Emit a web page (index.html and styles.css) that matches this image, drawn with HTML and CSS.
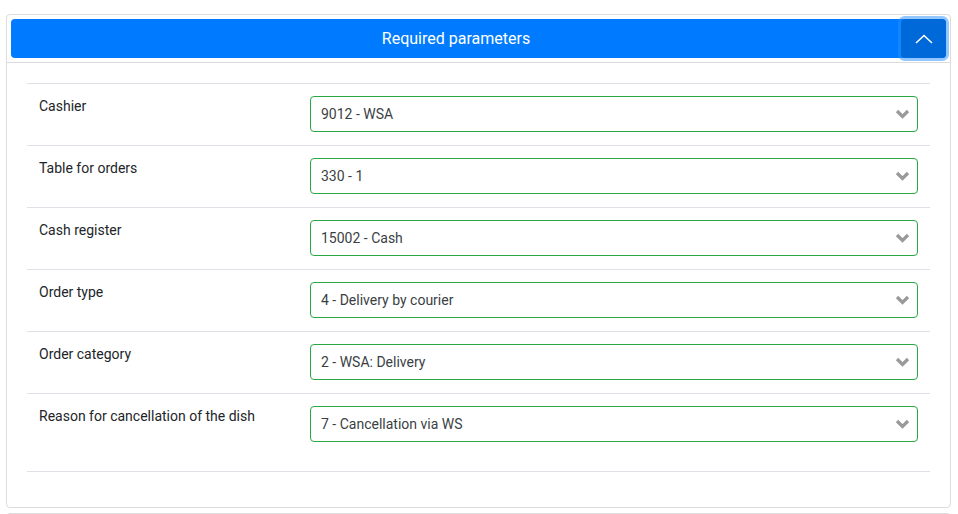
FILE: index.html
```html
<!DOCTYPE html>
<html>
<head>
    <title>Required parameters</title>
    <link rel="stylesheet" href="styles.css">
</head>
<body>
    <div class="page">
        <div class="card">
            <div class="card-header">
                <div class="header-bar">
                    <div class="header-title">Required parameters</div>
                    <button type="button" class="collapse-btn">
                        <svg width="18" height="10" viewBox="0 0 18 10"><polyline points="1,9 9,1.5 17,9" fill="none" stroke="#fff" stroke-width="1.6"/></svg>
                    </button>
                </div>
            </div>
            <div class="card-body">
                <div class="params">
                    <div class="param-row">
                        <div class="param-label">Cashier</div>
                        <div class="select-box"><span>9012 - WSA</span><svg class="caret" width="15" height="10" viewBox="0 0 15 10"><polyline points="2,2 7.5,7.5 13,2" fill="none" stroke="#999" stroke-width="3.2"/></svg></div>
                    </div>
                    <div class="param-row">
                        <div class="param-label">Table for orders</div>
                        <div class="select-box"><span>330 - 1</span><svg class="caret" width="15" height="10" viewBox="0 0 15 10"><polyline points="2,2 7.5,7.5 13,2" fill="none" stroke="#999" stroke-width="3.2"/></svg></div>
                    </div>
                    <div class="param-row">
                        <div class="param-label">Cash register</div>
                        <div class="select-box"><span>15002 - Cash</span><svg class="caret" width="15" height="10" viewBox="0 0 15 10"><polyline points="2,2 7.5,7.5 13,2" fill="none" stroke="#999" stroke-width="3.2"/></svg></div>
                    </div>
                    <div class="param-row">
                        <div class="param-label">Order type</div>
                        <div class="select-box"><span>4 - Delivery by courier</span><svg class="caret" width="15" height="10" viewBox="0 0 15 10"><polyline points="2,2 7.5,7.5 13,2" fill="none" stroke="#999" stroke-width="3.2"/></svg></div>
                    </div>
                    <div class="param-row">
                        <div class="param-label">Order category</div>
                        <div class="select-box"><span>2 - WSA: Delivery</span><svg class="caret" width="15" height="10" viewBox="0 0 15 10"><polyline points="2,2 7.5,7.5 13,2" fill="none" stroke="#999" stroke-width="3.2"/></svg></div>
                    </div>
                    <div class="param-row">
                        <div class="param-label">Reason for cancellation of the dish</div>
                        <div class="select-box"><span>7 - Cancellation via WS</span><svg class="caret" width="15" height="10" viewBox="0 0 15 10"><polyline points="2,2 7.5,7.5 13,2" fill="none" stroke="#999" stroke-width="3.2"/></svg></div>
                    </div>
                </div>
            </div>
        </div>
        <div class="card next-card"></div>
    </div>
</body>
</html>
```

FILE: styles.css
```css
body {
    font-family: Roboto, "Liberation Sans", sans-serif;
    font-size: 14px;
    color: #212529;
    background-color: #fff;
    margin: 0;
    padding: 0;
}
.page {
    padding: 14px 7px 0 6px;
}
.card {
    border: 1px solid #dcdcdc;
    border-radius: 4px;
    background-color: #fff;
}
.card-header {
    padding: 4px;
    border-bottom: 1px solid #dcdcdc;
}
.header-bar {
    display: flex;
    align-items: center;
    height: 39px;
    background-color: #007bff;
    border-radius: 4px;
}
.header-title {
    flex: 1;
    text-align: center;
    color: #fff;
    font-size: 16px;
}
.collapse-btn {
    width: 45px;
    height: 39px;
    border: none;
    border-radius: 4px;
    background-color: #0069d9;
    box-shadow: 0 0 0 3px rgba(38, 143, 255, 0.5);
    display: flex;
    align-items: center;
    justify-content: center;
    padding: 0;
    cursor: pointer;
}
.card-body {
    padding: 20px 20px 35px 20px;
}
.params {
    border-top: 1px solid #dee2e6;
    border-bottom: 1px solid #dee2e6;
    padding-bottom: 16px;
}
.param-row {
    display: flex;
    padding: 12px 12px 13px 12px;
    line-height: 21px;
}
.param-row + .param-row {
    border-top: 1px solid #dee2e6;
}
.param-label {
    width: 271px;
}
.select-box {
    flex: 1;
    height: 36px;
    box-sizing: border-box;
    border: 1px solid #28a745;
    border-radius: 4px;
    display: flex;
    align-items: center;
    justify-content: space-between;
    padding: 0 7px 0 10px;
    color: #3a3f44;
}
.caret {
    display: block;
}
.next-card {
    margin-top: 5px;
    height: 20px;
}
```
